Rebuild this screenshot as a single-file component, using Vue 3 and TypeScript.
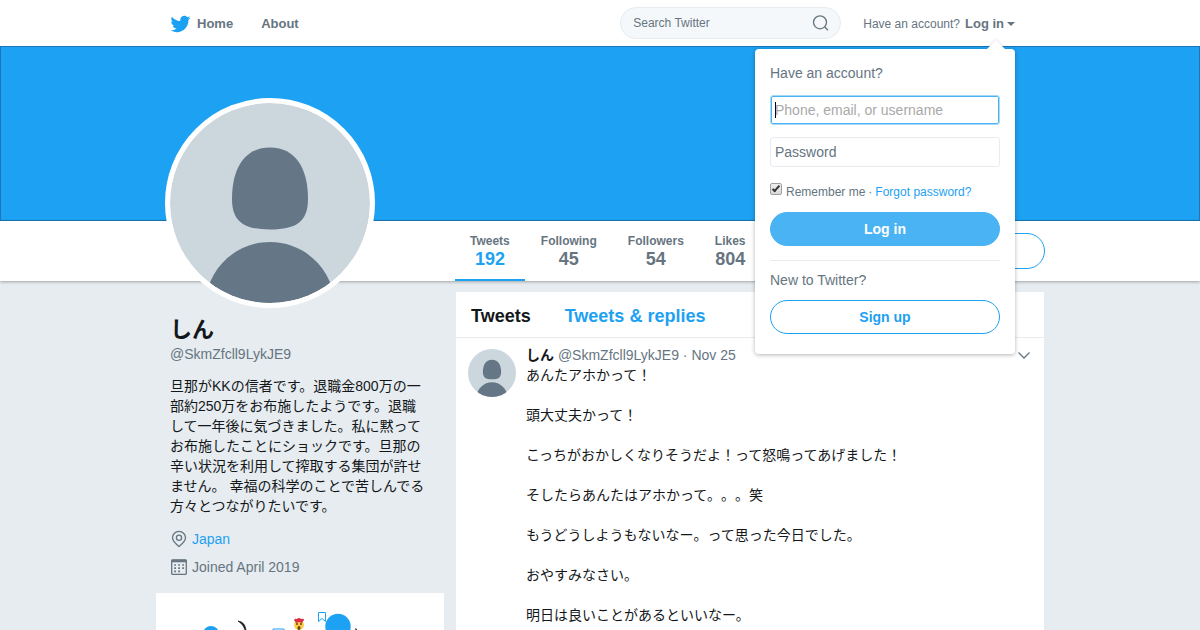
<script setup lang="ts">
import { onMounted, ref } from 'vue'

interface Stat {
  label: string
  value: number
  active?: boolean
}

const stats: Stat[] = [
  { label: 'Tweets', value: 192, active: true },
  { label: 'Following', value: 45 },
  { label: 'Followers', value: 54 },
  { label: 'Likes', value: 804 },
]

const profile = {
  name: 'しん',
  handle: '@SkmZfcll9LykJE9',
  bio: '旦那がKKの信者です。退職金800万の一部約250万をお布施したようです。退職して一年後に気づきました。私に黙ってお布施したことにショックです。旦那の辛い状況を利用して搾取する集団が許せません。 幸福の科学のことで苦しんでる方々とつながりたいです。',
  location: 'Japan',
  joined: 'Joined April 2019',
}

const tweet = {
  date: 'Nov 25',
  lines: [
    'あんたアホかって！',
    '頭大丈夫かって！',
    'こっちがおかしくなりそうだよ！って怒鳴ってあげました！',
    'そしたらあんたはアホかって。。。笑',
    'もうどうしようもないなー。って思った今日でした。',
    'おやすみなさい。',
    '明日は良いことがあるといいなー。',
  ],
}

const account = ref('')
const password = ref('')
const search = ref('')
const remember = ref(true)
const accountInput = ref<HTMLInputElement | null>(null)

onMounted(() => accountInput.value?.focus())
</script>

<template>
  <div class="page">
    <header class="topbar">
      <div class="container topbar-inner">
        <nav class="nav">
          <a href="#" class="nav-link">
            <svg class="bird" viewBox="0 0 24 24" aria-hidden="true">
              <path d="M23.954 4.569c-.885.389-1.83.654-2.825.775 1.014-.611 1.794-1.574 2.163-2.723-.951.555-2.005.959-3.127 1.184-.896-.959-2.173-1.559-3.591-1.559-2.717 0-4.92 2.203-4.92 4.917 0 .39.045.765.127 1.124C7.691 8.094 4.066 6.13 1.64 3.161c-.427.722-.666 1.561-.666 2.475 0 1.71.87 3.213 2.188 4.096-.807-.026-1.566-.248-2.228-.616v.061c0 2.385 1.693 4.374 3.946 4.827-.413.111-.849.171-1.296.171-.314 0-.615-.03-.916-.086.631 1.953 2.445 3.377 4.604 3.417-1.68 1.319-3.809 2.105-6.102 2.105-.39 0-.779-.023-1.17-.067 2.189 1.394 4.768 2.209 7.557 2.209 9.054 0 13.999-7.496 13.999-13.986 0-.209 0-.42-.015-.63.961-.689 1.8-1.56 2.46-2.548z" />
            </svg>
            Home
          </a>
          <a href="#" class="nav-link">About</a>
        </nav>
        <div class="tools">
          <form class="search" @submit.prevent>
            <input v-model="search" type="text" placeholder="Search Twitter" aria-label="Search Twitter" />
            <button type="submit" aria-label="Search">
              <svg viewBox="0 0 18 18" aria-hidden="true">
                <circle cx="8" cy="8.3" r="6.5" />
                <path d="M12.700 13l3.300 3.300" />
              </svg>
            </button>
          </form>
          <div class="session">
            <button type="button" class="session-toggle">
              Have an account? <strong>Log in</strong><span class="caret"></span>
            </button>
            <div class="popup">
              <p class="popup-title">Have an account?</p>
              <form @submit.prevent>
                <input ref="accountInput" v-model="account" class="field" type="text" placeholder="Phone, email, or username" aria-label="Phone, email, or username" />
                <input v-model="password" class="field" type="password" placeholder="Password" aria-label="Password" />
                <div class="remember">
                  <label><input v-model="remember" type="checkbox" />Remember me</label>
                  <span>·</span>
                  <a href="#">Forgot password?</a>
                </div>
                <button type="submit" class="pill pill-solid">Log in</button>
              </form>
              <p class="popup-title signup-title">New to Twitter?</p>
              <button type="button" class="pill">Sign up</button>
            </div>
          </div>
        </div>
      </div>
    </header>

    <div class="banner"></div>

    <div class="statsbar">
      <div class="container statsbar-inner">
        <div class="avatar">
          <svg viewBox="0 0 200 200" role="img" aria-label="しん">
            <path d="M100 44.500C74 44.500 62 66 62 96C62 118 73 126.500 100 126.500S138 118 138 96C138 66 126 44.500 100 44.500Z" />
            <path d="M35 200C38 165 66 139 100 139S162 165 165 200Z" />
          </svg>
        </div>
        <nav class="stats">
          <a v-for="s in stats" :key="s.label" href="#" class="stat" :class="{ active: s.active }">
            <span class="stat-label">{{ s.label }}</span>
            <span class="stat-value">{{ s.value }}</span>
          </a>
        </nav>
        <button type="button" class="pill follow">Follow</button>
      </div>
    </div>

    <main class="container columns">
      <aside>
        <div class="about">
          <h1>{{ profile.name }}</h1>
          <p class="handle">{{ profile.handle }}</p>
          <p class="bio">{{ profile.bio }}</p>
          <p class="meta">
            <svg viewBox="0 0 18 18" aria-hidden="true">
              <path d="M9 16.500C6.500 14.500 2.500 11.500 2.500 7.800a6.500 6.500 0 0 1 13 0C15.500 11.500 11.500 14.500 9 16.500Z" />
              <circle cx="9" cy="7.800" r="2.600" />
            </svg>
            <a href="#">{{ profile.location }}</a>
          </p>
          <p class="meta">
            <svg viewBox="0 0 18 18" aria-hidden="true">
              <rect x="1.700" y="2" width="14.600" height="14.400" rx="1" />
              <path class="thick" d="M1.500 3h15" />
              <path class="dots" d="M4.200 7h10M4.200 10.200h10M4.200 13.400h6" />
            </svg>
            <span>{{ profile.joined }}</span>
          </p>
        </div>
        <div class="promo">
          <svg viewBox="0 0 288 60" aria-hidden="true">
            <circle cx="55" cy="41" r="8" fill="#1da1f2" />
            <path d="M82 28q9 1 8 14q-1-10-8-14z" fill="#14171a" stroke="#14171a" stroke-width="0.700" />
            <path d="M117 36h11v8h-11z" fill="#fff" stroke="#1da1f2" />
            <circle cx="143" cy="32" r="5" fill="#ffcc4d" />
            <path d="M138 27q1-2 3-1q2-2 4 0q3-1 3 1l-2 3l-3-1l-3 1z" fill="#dd2e44" />
            <circle cx="141" cy="31" r="1" fill="#664500" />
            <circle cx="145" cy="31" r="1" fill="#664500" />
            <ellipse cx="143" cy="35" rx="1.500" ry="2" fill="#664500" />
            <path d="M162.500 19.500h7v9l-3.500-3l-3.500 3z" fill="#fff" stroke="#1da1f2" />
            <circle cx="182" cy="33.500" r="12.700" fill="#1da1f2" />
            <path d="M199.500 35.500l2 3" stroke="#14171a" stroke-width="1.200" />
          </svg>
        </div>
      </aside>

      <section class="feed">
        <div class="tabs">
          <h2>Tweets</h2>
          <a href="#">Tweets &amp; replies</a>
        </div>
        <article class="tweet">
          <div class="tweet-avatar">
            <svg viewBox="0 0 200 200" aria-hidden="true">
              <path d="M100 44.500C74 44.500 62 66 62 96C62 118 73 126.500 100 126.500S138 118 138 96C138 66 126 44.500 100 44.500Z" />
              <path d="M35 200C38 165 66 139 100 139S162 165 165 200Z" />
            </svg>
          </div>
          <div class="tweet-body">
            <div class="tweet-head">
              <p><strong>{{ profile.name }}</strong> {{ profile.handle }} · {{ tweet.date }}</p>
              <button type="button" aria-label="More">
                <svg viewBox="0 0 14 8" aria-hidden="true"><path d="M1.500 1.500L7 7l5.500-5.500" /></svg>
              </button>
            </div>
            <p v-for="line in tweet.lines" :key="line" class="tweet-line">{{ line }}</p>
          </div>
        </article>
      </section>
    </main>
  </div>
</template>

<style>
html,
body {
  height: 100%;
  overflow: hidden;
  background: #e6ecf0;
}
</style>

<style scoped>
.page {
  font: 14px/20px "Liberation Sans", "Noto Sans CJK JP", sans-serif;
  color: #14171a;
  text-spacing-trim: space-all;
}
.page * {
  box-sizing: border-box;
}
p,
h1,
h2 {
  margin: 0;
}
a {
  color: #1da1f2;
  text-decoration: none;
}
button,
input {
  font: inherit;
  color: inherit;
}
button {
  padding: 0;
  border: 0;
  background: none;
  cursor: pointer;
}
.container {
  max-width: 890px;
  margin: 0 auto;
}

.topbar {
  position: relative;
  z-index: 3;
  background: #fff;
}
.topbar-inner {
  display: flex;
  justify-content: space-between;
  align-items: center;
  height: 46px;
  padding: 0 30px 0 15px;
  color: #66757f;
}
.nav {
  display: flex;
  gap: 28px;
  padding-top: 2px;
}
.nav-link {
  display: flex;
  align-items: center;
  gap: 6px;
  font-size: 13px;
  font-weight: bold;
  color: #66757f;
}
.bird {
  width: 21px;
  height: 20px;
  fill: #1da1f2;
}
.tools {
  display: flex;
  align-items: center;
  gap: 22px;
}
.search {
  display: flex;
  align-items: center;
  width: 221px;
  height: 32px;
  padding: 0 10px 0 12px;
  border: 1px solid #e6ecf0;
  border-radius: 16px;
  background: #f5f8fa;
}
.search input {
  flex: 1;
  min-width: 0;
  padding: 0;
  border: 0;
  outline: 0;
  background: none;
  font-size: 12px;
}
.search input::placeholder {
  color: #66757f;
}
.search button {
  display: flex;
}
.search svg {
  width: 18px;
  height: 18px;
  fill: none;
  stroke: #66757f;
  stroke-width: 1.3;
}
.session {
  position: relative;
  padding-top: 2px;
}
.session-toggle {
  display: flex;
  align-items: center;
  gap: 5px;
  font-size: 12px;
}
.session-toggle strong {
  font-size: 13px;
}
.caret {
  margin-left: -2px;
  border: 4px solid transparent;
  border-top-color: #66757f;
  border-bottom: 0;
}

.popup {
  position: absolute;
  top: 37px;
  right: 0;
  width: 260px;
  padding: 14px 15px 20px;
  border-radius: 4px;
  background: #fff;
  box-shadow: 0 1px 4px rgba(0, 0, 0, 0.3);
}
.popup::before {
  content: "";
  position: absolute;
  top: -9px;
  right: 10px;
  border: 9px solid transparent;
  border-top: 0;
  border-bottom-color: #fff;
  filter: drop-shadow(0 -1px 1px rgba(0, 0, 0, 0.1));
}
.popup-title {
  margin-bottom: 12px;
}
.field {
  display: block;
  width: 100%;
  height: 30px;
  margin-bottom: 12px;
  padding: 0 4px;
  border: 1px solid #e6ecf0;
  border-radius: 3px;
  background: #fff;
}
.field::placeholder {
  color: #66757f;
}
.field:focus {
  outline: 0;
  border-color: #a7d9f8;
  box-shadow: inset 0 0 0 1px #4ab3f4;
  caret-color: #000;
}
.field:focus:placeholder-shown {
  caret-color: transparent;
  background: linear-gradient(#000, #000) 4px center / 1px 16px no-repeat #fff;
}
.field:focus::placeholder {
  color: #a9a9a9;
}
.remember {
  display: flex;
  gap: 3px;
  margin: 15px 0 10px;
  font-size: 12px;
}
.remember label {
  display: flex;
  gap: 4px;
}
.remember input {
  appearance: none;
  width: 12px;
  height: 12px;
  margin: 1px 0 0;
  border: 1px solid #a0a0a0;
  border-radius: 2px;
  background: linear-gradient(#eee, #d8d8d8);
}
.remember input:checked::before {
  content: "";
  display: block;
  width: 2px;
  height: 6px;
  margin: 0 0 0 3px;
  border: solid #333;
  border-width: 0 2px 2px 0;
  transform: rotate(42deg);
}
.pill {
  display: block;
  width: 100%;
  height: 34px;
  border: 1px solid #1da1f2;
  border-radius: 18px;
  background: #fff;
  color: #1da1f2;
  font-weight: bold;
}
.pill-solid {
  border-color: #4ab3f4;
  background: #4ab3f4;
  color: #fff;
}
.signup-title {
  margin: 14px 0 10px;
  padding-top: 9px;
  border-top: 1px solid #e6ecf0;
}

.banner {
  height: 175px;
  border: 1px solid #1878b6;
  background: #1da1f2;
}

.statsbar {
  position: relative;
  z-index: 1;
  background: #fff;
  box-shadow: 0 1px 3px rgba(0, 0, 0, 0.3);
}
.statsbar-inner {
  position: relative;
  display: flex;
  justify-content: space-between;
  align-items: center;
  height: 60px;
  padding-left: 300px;
}
.avatar {
  position: absolute;
  left: 10px;
  bottom: -27px;
  width: 210px;
  height: 210px;
  border: 5px solid #fff;
  border-radius: 50%;
  overflow: hidden;
  background: #fff;
}
.avatar svg,
.tweet-avatar svg {
  display: block;
  border-radius: 50%;
  background: #ccd6dd;
  fill: #657786;
}
.stats {
  display: flex;
  gap: 1px;
  height: 100%;
}
.stat {
  display: flex;
  flex-direction: column;
  align-items: center;
  padding: 11px 15px 0;
  color: #66757f;
  font-weight: bold;
}
.stat-label {
  font-size: 12px;
  line-height: 18px;
}
.stat-value {
  font-size: 18px;
  line-height: 18px;
}
.stat.active {
  border-bottom: 2px solid #1da1f2;
}
.stat.active .stat-value {
  color: #1da1f2;
}
.follow {
  width: 120px;
  height: 36px;
}

.columns {
  display: grid;
  grid-template-columns: 288px minmax(0, 1fr);
  gap: 12px;
  padding: 11px 1px 0;
}
.about {
  padding: 24px 16px 8px 14px;
}
h1 {
  font-size: 22px;
  line-height: 28px;
}
.handle {
  color: #66757f;
}
.bio {
  margin: 12px 0 13px;
}
.meta {
  display: flex;
  align-items: center;
  gap: 4px;
  margin-bottom: 8px;
  color: #66757f;
}
.meta svg {
  width: 18px;
  height: 18px;
  fill: none;
  stroke: #66757f;
  stroke-width: 1.3;
}
.meta .thick {
  stroke-width: 2.6;
}
.meta .dots {
  stroke-width: 1.7;
  stroke-dasharray: 1.8 2.2;
}
.promo {
  background: #fff;
}
.promo svg {
  display: block;
}

.feed {
  background: #fff;
}
.tabs {
  display: flex;
  gap: 34px;
  padding: 13px 15px 10px;
  border-bottom: 1px solid #e6ecf0;
  font-size: 18px;
  line-height: 22px;
  font-weight: bold;
}
h2 {
  font: inherit;
}
.tweet {
  display: flex;
  gap: 10px;
  padding: 7px 13px 20px 12px;
}
.tweet-avatar {
  flex: none;
  width: 48px;
  padding-top: 4px;
}
.tweet-body {
  flex: 1;
}
.tweet-head {
  display: flex;
  justify-content: space-between;
  align-items: center;
  color: #66757f;
}
.tweet-head strong {
  color: #14171a;
}
.tweet-head button {
  display: flex;
}
.tweet-head svg {
  width: 14px;
  height: 8px;
  fill: none;
  stroke: #66757f;
  stroke-width: 1.3;
}
.tweet-line {
  margin-bottom: 20px;
}
</style>
